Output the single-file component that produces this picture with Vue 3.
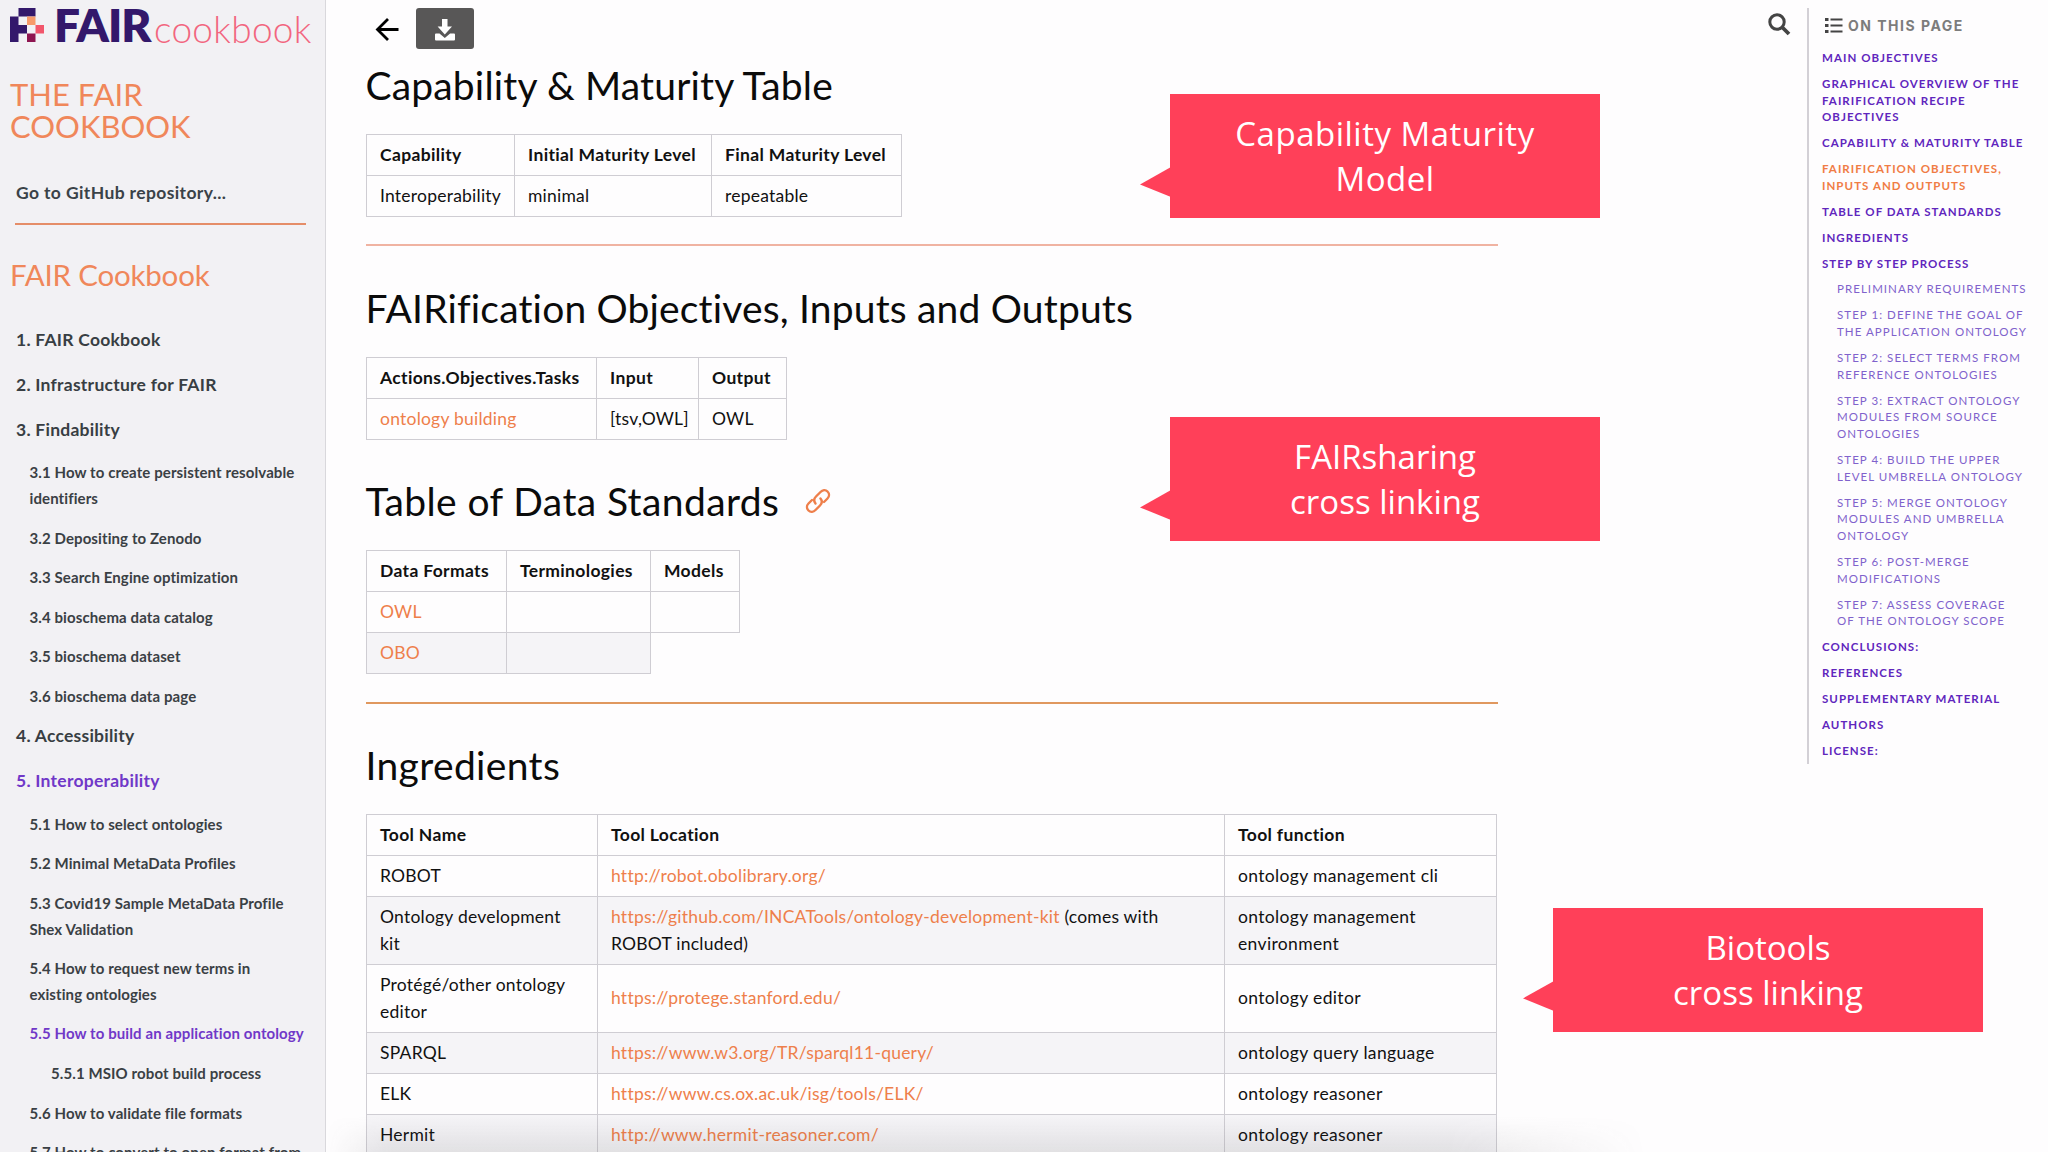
<template>
  <div class="page">
    <aside class="sidebar">
      <div class="logo">
        <svg class="logo-mark" width="34" height="34" viewBox="0 0 4 4">
          <path fill="#33186b" d="M1 0h2v1h-2zM0 1h1v3h-1zM1 2h1v1h-1z" />
          <path fill="#f79a6b" d="M2 1h1v1h-1z" />
          <path fill="#f2566c" d="M3 2h1v1h-1z" />
          <path fill="#8e1550" d="M2 3h1v1h-1z" />
        </svg>
        <span class="logo-fair">FAIR</span>
        <span class="logo-cookbook">cookbook</span>
      </div>
      <h1 class="site-title">THE FAIR<br />COOKBOOK</h1>
      <a class="repo-link">Go to GitHub repository...</a>
      <hr class="side-rule" />
      <p class="nav-caption">FAIR Cookbook</p>
      <ul class="nav">
        <li v-for="item in nav" :key="item.title">
          <a class="nav-top" :class="{ current: item.current }">{{ item.title }}</a>
          <ul v-if="item.children" class="nav-sub">
            <li v-for="child in item.children" :key="child.title">
              <a :class="{ current: child.current, deep: child.deep }">{{ child.title }}</a>
            </li>
          </ul>
        </li>
      </ul>
    </aside>

    <main class="content">
      <div class="topbar">
        <svg class="back" width="24" height="26" viewBox="0 0 24 26">
          <path d="M13 2L2.500 12.500l10.500 10.500M2.500 12.500h21" fill="none" stroke="#000" stroke-width="2.800" />
        </svg>
        <button class="download">
          <svg width="20" height="22" viewBox="0 0 20 22" fill="#fff">
            <path d="M7 0h5.500v7.500h4.500l-7.200 8l-7.200-8h4.400z" />
            <path d="M1 14.500h3.500l5.300 4.500l5.300-4.500h3.900q1 0 1 1v5q0 1-1 1h-18q-1 0-1-1v-5q0-1 1-1z" />
          </svg>
        </button>
        <svg class="search" width="23" height="23" viewBox="0 0 23 23" fill="none" stroke="#444">
          <circle cx="9" cy="9" r="7.200" stroke-width="3" />
          <path d="M14 14l7 7" stroke-width="3.800" />
        </svg>
      </div>

      <h2 class="h-capability">Capability &amp; Maturity Table</h2>
      <table class="t-capability">
        <colgroup><col /><col /><col /></colgroup>
        <tbody>
          <tr><th>Capability</th><th>Initial Maturity Level</th><th>Final Maturity Level</th></tr>
          <tr><td>Interoperability</td><td>minimal</td><td>repeatable</td></tr>
        </tbody>
      </table>
      <hr class="rule pale" />

      <h2 class="h-objectives">FAIRification Objectives, Inputs and Outputs</h2>
      <table class="t-objectives">
        <colgroup><col /><col /><col /></colgroup>
        <tbody>
          <tr><th>Actions.Objectives.Tasks</th><th>Input</th><th>Output</th></tr>
          <tr><td><a>ontology building</a></td><td>[tsv,OWL]</td><td>OWL</td></tr>
        </tbody>
      </table>

      <h2 class="h-standards">
        <span>Table of Data Standards</span>
        <svg width="26" height="26" viewBox="0 0 26 26" fill="none" stroke="#ee7f4b" stroke-width="2.400" stroke-linecap="round">
          <path d="M10.500 15.500c-2-2.500-1.500-5 .5-7l4.500-4.500c2-2 5-2.500 7-.5s2 5 0 7l-3.500 3.500" />
          <path d="M15.500 10.500c2 2.500 1.500 5-.5 7l-4.500 4.500c-2 2-5 2.500-7 .5s-2-5 0-7l3.500-3.500" />
        </svg>
      </h2>
      <table class="t-standards">
        <colgroup><col /><col /><col /></colgroup>
        <tbody>
          <tr><th>Data Formats</th><th>Terminologies</th><th>Models</th></tr>
          <tr><td><a>OWL</a></td><td></td><td></td></tr>
          <tr class="striped"><td><a>OBO</a></td><td></td></tr>
        </tbody>
      </table>
      <hr class="rule" />

      <h2 class="h-ingredients">Ingredients</h2>
      <table class="t-ingredients">
        <colgroup><col /><col /><col /></colgroup>
        <tbody>
          <tr><th>Tool Name</th><th>Tool Location</th><th>Tool function</th></tr>
          <tr v-for="(tool, i) in tools" :key="tool.name" :class="{ striped: i % 2 === 1 }">
            <td>{{ tool.name }}</td>
            <td><a>{{ tool.url }}</a>{{ tool.note }}</td>
            <td>{{ tool.fn }}</td>
          </tr>
        </tbody>
      </table>
    </main>

    <nav class="toc">
      <div class="toc-head">
        <svg width="18" height="16" viewBox="0 0 18 16" fill="#444">
          <path d="M0 0h3.500v3h-3.500zM0 6h3.500v3h-3.500zM0 12h3.500v3h-3.500z" />
          <path d="M5.500 .5h12v2h-12zM5.500 6.500h12v2h-12zM5.500 12.500h12v2h-12z" />
        </svg>
        <span>ON THIS PAGE</span>
      </div>
      <ul>
        <li v-for="entry in toc" :key="entry.lines[0]" :class="{ sub: entry.sub, active: entry.active }">
          <div v-for="line in entry.lines" :key="line">{{ line }}</div>
        </li>
      </ul>
    </nav>

    <div class="bottom-shade"></div>

    <div v-for="note in callouts" :key="note.id" class="callout" :class="note.id">
      <div v-for="line in note.lines" :key="line">{{ line }}</div>
    </div>
  </div>
</template>

<script setup>
const nav = [
  { title: '1. FAIR Cookbook' },
  { title: '2. Infrastructure for FAIR' },
  {
    title: '3. Findability',
    children: [
      { title: '3.1 How to create persistent resolvable\nidentifiers' },
      { title: '3.2 Depositing to Zenodo' },
      { title: '3.3 Search Engine optimization' },
      { title: '3.4 bioschema data catalog' },
      { title: '3.5 bioschema dataset' },
      { title: '3.6 bioschema data page' },
    ],
  },
  { title: '4. Accessibility' },
  {
    title: '5. Interoperability',
    current: true,
    children: [
      { title: '5.1 How to select ontologies' },
      { title: '5.2 Minimal MetaData Profiles' },
      { title: '5.3 Covid19 Sample MetaData Profile\nShex Validation' },
      { title: '5.4 How to request new terms in\nexisting ontologies' },
      { title: '5.5 How to build an application ontology', current: true },
      { title: '5.5.1 MSIO robot build process', deep: true },
      { title: '5.6 How to validate file formats' },
      { title: '5.7 How to convert to open format from' },
    ],
  },
];

const tools = [
  { name: 'ROBOT', url: 'http://robot.obolibrary.org/', fn: 'ontology management cli' },
  {
    name: 'Ontology development kit',
    url: 'https://github.com/INCATools/ontology-development-kit',
    note: ' (comes with ROBOT included)',
    fn: 'ontology management environment',
  },
  { name: 'Protégé/other ontology editor', url: 'https://protege.stanford.edu/', fn: 'ontology editor' },
  { name: 'SPARQL', url: 'https://www.w3.org/TR/sparql11-query/', fn: 'ontology query language' },
  { name: 'ELK', url: 'https://www.cs.ox.ac.uk/isg/tools/ELK/', fn: 'ontology reasoner' },
  { name: 'Hermit', url: 'http://www.hermit-reasoner.com/', fn: 'ontology reasoner' },
];

const toc = [
  { lines: ['MAIN OBJECTIVES'] },
  { lines: ['GRAPHICAL OVERVIEW OF THE', 'FAIRIFICATION RECIPE', 'OBJECTIVES'] },
  { lines: ['CAPABILITY & MATURITY TABLE'] },
  { lines: ['FAIRIFICATION OBJECTIVES,', 'INPUTS AND OUTPUTS'], active: true },
  { lines: ['TABLE OF DATA STANDARDS'] },
  { lines: ['INGREDIENTS'] },
  { lines: ['STEP BY STEP PROCESS'] },
  { lines: ['PRELIMINARY REQUIREMENTS'], sub: true },
  { lines: ['STEP 1: DEFINE THE GOAL OF', 'THE APPLICATION ONTOLOGY'], sub: true },
  { lines: ['STEP 2: SELECT TERMS FROM', 'REFERENCE ONTOLOGIES'], sub: true },
  { lines: ['STEP 3: EXTRACT ONTOLOGY', 'MODULES FROM SOURCE', 'ONTOLOGIES'], sub: true },
  { lines: ['STEP 4: BUILD THE UPPER', 'LEVEL UMBRELLA ONTOLOGY'], sub: true },
  { lines: ['STEP 5: MERGE ONTOLOGY', 'MODULES AND UMBRELLA', 'ONTOLOGY'], sub: true },
  { lines: ['STEP 6: POST-MERGE', 'MODIFICATIONS'], sub: true },
  { lines: ['STEP 7: ASSESS COVERAGE', 'OF THE ONTOLOGY SCOPE'], sub: true },
  { lines: ['CONCLUSIONS:'] },
  { lines: ['REFERENCES'] },
  { lines: ['SUPPLEMENTARY MATERIAL'] },
  { lines: ['AUTHORS'] },
  { lines: ['LICENSE:'] },
];

const callouts = [
  { id: 'maturity', lines: ['Capability Maturity', 'Model'] },
  { id: 'fairsharing', lines: ['FAIRsharing', 'cross linking'] },
  { id: 'biotools', lines: ['Biotools', 'cross linking'] },
];
</script>

<style>
body {
  margin: 0;
  overflow: hidden;
}
</style>

<style scoped>
.page {
  position: relative;
  display: flex;
  width: 2048px;
  height: 1152px;
  overflow: hidden;
  background: #fefdfe;
  color: #111;
  font-family: Lato, "Liberation Sans", sans-serif;
}

ul {
  list-style: none;
  margin: 0;
  padding: 0;
}

/* sidebar */
.sidebar {
  box-sizing: border-box;
  width: 326px;
  flex: none;
  border-right: 1px solid #d9d8dc;
  background: #f2f1f4;
  overflow: hidden;
}

.logo {
  display: flex;
  align-items: flex-start;
  height: 78px;
  padding-left: 10px;
}

.logo-mark {
  margin-top: 8px;
}

.logo-fair {
  margin-left: 10px;
  width: 98px;
  font-size: 46px;
  font-weight: 800;
  line-height: 50px;
  color: #33186b;
  letter-spacing: -1px;
}

.logo-cookbook {
  margin-left: 2px;
  font-size: 37px;
  font-weight: 300;
  line-height: 57px;
  letter-spacing: 0.300px;
  color: #f2667f;
}

.site-title {
  margin: 0 0 0 10px;
  font-size: 31px;
  font-weight: 400;
  line-height: 32px;
  color: #f0875a;
}

.repo-link {
  display: block;
  margin: 36px 0 0 16px;
  font-size: 17.5px;
  font-weight: 700;
  line-height: 30px;
  letter-spacing: 0.380px;
  color: #3a4248;
}

.side-rule {
  width: 291px;
  height: 2px;
  margin: 15px 0 0 15px;
  border: 0;
  background: #e58d68;
}

.nav-caption {
  margin: 30px 0 25px 10px;
  font-size: 29.5px;
  line-height: 40px;
  letter-spacing: -0.200px;
  color: #f0875a;
}

.nav-top {
  display: block;
  padding: 0 0 5px 16px;
  font-size: 17.5px;
  font-weight: 700;
  line-height: 40px;
  letter-spacing: 0.250px;
  color: #383e43;
}

.nav-sub {
  margin-top: -1.7px;
}

.nav-sub a {
  display: block;
  padding: 7px 0 7px 29.5px;
  font-size: 15px;
  font-weight: 700;
  line-height: 25.6px;
  letter-spacing: 0.100px;
  color: #3a4044;
  white-space: pre;
}

.nav-sub a.deep {
  padding-left: 51px;
}

.nav a.current {
  color: #7038c8;
}

/* content */
.content {
  width: 1481px;
  flex: none;
  box-sizing: border-box;
  padding-left: 39.500px;
}

.topbar {
  display: flex;
  align-items: flex-start;
  height: 57px;
}

.back {
  margin: 17px 0 0 9px;
}

.download {
  display: flex;
  justify-content: center;
  width: 58px;
  height: 41px;
  margin: 8px 0 0 17px;
  padding: 11px 0 0;
  border: 0;
  border-radius: 3px;
  background: #585757;
}

.search {
  margin: 13px 16px 0 auto;
}

h2 {
  margin: 0;
  height: 60px;
  font-size: 39px;
  font-weight: 400;
  line-height: 56px;
  letter-spacing: 0.170px;
  color: #0b0b0b;
  white-space: nowrap;
}

.h-capability {
  margin-bottom: 17px;
}

.h-objectives {
  margin: 34px 0 17px;
}

.h-standards {
  display: flex;
  gap: 26px;
  margin: 33px 0 17px;
  letter-spacing: 0.400px;
}

.h-standards svg {
  margin-top: 15px;
}

.h-ingredients {
  margin: 33px 0 17px;
  letter-spacing: 0.350px;
}

.rule {
  width: 1132px;
  height: 2px;
  margin: 28px 0 0;
  border: 0;
  background: #e0985f;
}

.rule.pale {
  margin-top: 27px;
  background: #f0b3a2;
}

table {
  border-collapse: collapse;
  table-layout: fixed;
  font-size: 17.5px;
  line-height: 27px;
}

th,
td {
  box-sizing: border-box;
  height: 41px;
  padding: 5.500px 13.500px 7.500px;
  border: 1px solid #cfcdd3;
  text-align: left;
  font-weight: 400;
  letter-spacing: 0.230px;
  white-space: nowrap;
}

th {
  font-weight: 700;
  letter-spacing: 0.350px;
}

td a {
  color: #ee7f4b;
}

.striped td {
  background: #f5f4f7;
}

.t-capability {
  width: 536px;
}
.t-capability col:nth-child(1) { width: 148px; }
.t-capability col:nth-child(2) { width: 197px; }

.t-objectives {
  width: 421px;
}
.t-objectives col:nth-child(1) { width: 230px; }
.t-objectives col:nth-child(2) { width: 102px; }

.t-standards {
  width: 374px;
}
.t-standards col:nth-child(1) { width: 140px; }
.t-standards col:nth-child(2) { width: 144px; }

.t-ingredients {
  width: 1131px;
}
.t-ingredients col:nth-child(1) { width: 231px; }
.t-ingredients col:nth-child(2) { width: 627px; }
.t-ingredients td {
  white-space: normal;
}
.t-ingredients td:first-child {
  padding-right: 20px;
}
.t-ingredients td:last-child {
  letter-spacing: 0.350px;
}

/* right-hand contents list */
.toc {
  box-sizing: border-box;
  width: 241px;
  height: 756px;
  margin-top: 8px;
  padding-left: 13px;
  border-left: 2px solid #d3d0d6;
  white-space: nowrap;
}

.toc-head {
  display: flex;
  align-items: center;
  gap: 5px;
  height: 35px;
  padding-left: 3px;
  font-family: Inter, "Liberation Sans", sans-serif;
  font-size: 14px;
  font-weight: 700;
  letter-spacing: 1.500px;
  color: #7c7c7c;
}

.toc ul {
  padding-top: 7px;
}

.toc li {
  margin-bottom: 9.140px;
  font-size: 11.500px;
  font-weight: 700;
  line-height: 16.750px;
  letter-spacing: 1.050px;
  color: #6026bd;
}

.toc li.sub {
  padding-left: 15px;
  font-weight: 400;
  color: #8062cc;
}

.toc li.active {
  color: #f07c45;
}

/* soft shadow along the lower edge of the window */
.bottom-shade {
  position: absolute;
  left: 326px;
  bottom: 0;
  width: 1320px;
  height: 36px;
  background: linear-gradient(to bottom, rgba(60, 60, 60, 0), rgba(60, 60, 60, 0.1));
  -webkit-mask-image: linear-gradient(to right, transparent, #000 5%, #000 85%, transparent);
  mask-image: linear-gradient(to right, transparent, #000 5%, #000 85%, transparent);
}

/* annotations over the page */
.callout {
  position: absolute;
  box-sizing: border-box;
  width: 430px;
  height: 124px;
  padding-top: 17px;
  background: #ff4059;
  color: #fff;
  font-family: "Open Sans", "Noto Sans", sans-serif;
  font-size: 33px;
  line-height: 45px;
  text-align: center;
}

.callout::before {
  content: "";
  position: absolute;
  left: -30px;
  top: 73px;
  width: 31px;
  height: 30px;
  background: #ff4059;
  clip-path: polygon(0 58%, 100% 0, 100% 100%);
}

.maturity {
  left: 1170px;
  top: 94px;
  letter-spacing: 0.500px;
}

.fairsharing {
  left: 1170px;
  top: 417px;
}

.biotools {
  left: 1553px;
  top: 908px;
}
</style>
